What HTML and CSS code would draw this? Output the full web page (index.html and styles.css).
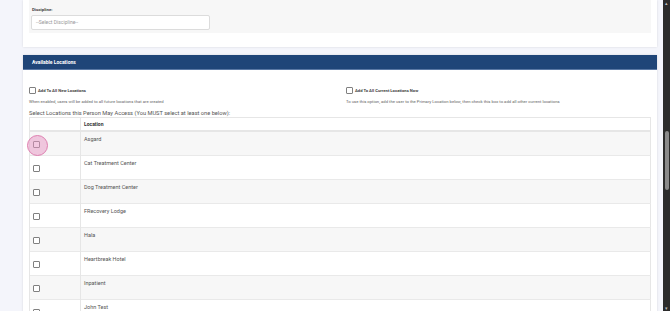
FILE: index.html
```html
<!DOCTYPE html>
<html lang="en">
<head>
  <meta charset="UTF-8">
  <title>User Locations</title>
  <link rel="stylesheet" href="styles.css">
</head>
<body>

<div class="screen">
  <div class="page">

    <!-- Discipline -->
    <div class="card card-top">
      <div class="well">
        <div class="field-label">Discipline:</div>
        <div class="select">--Select Discipline--</div>
      </div>
    </div>

    <!-- Locations -->
    <div class="card">
      <div class="card-header">Available Locations</div>
      <div class="card-body">
        <div class="options">
          <div class="option">
            <div class="option-line"><span class="check"></span><span class="option-label">Add To All New Locations</span></div>
            <div class="option-help">When enabled, users will be added to all future locations that are created</div>
          </div>
          <div class="option">
            <div class="option-line"><span class="check"></span><span class="option-label">Add To All Current Locations Now</span></div>
            <div class="option-help">To use this option, add the user to the Primary Location below, then check this box to add all other current locations</div>
          </div>
        </div>

        <div class="hint">Select Locations this Person May Access (You MUST select at least one below):</div>

        <table class="loc-table">
          <thead>
            <tr><th class="col-check"></th><th>Location</th></tr>
          </thead>
          <tbody>
            <tr><td class="col-check"><span class="check focus"></span></td><td>Asgard</td></tr>
            <tr><td class="col-check"><span class="check"></span></td><td>Cat Treatment Center</td></tr>
            <tr><td class="col-check"><span class="check"></span></td><td>Dog Treatment Center</td></tr>
            <tr><td class="col-check"><span class="check"></span></td><td>FRecovery Lodge</td></tr>
            <tr><td class="col-check"><span class="check"></span></td><td>Hala</td></tr>
            <tr><td class="col-check"><span class="check"></span></td><td>Heartbreak Hotel</td></tr>
            <tr><td class="col-check"><span class="check"></span></td><td>Inpatient</td></tr>
            <tr><td class="col-check"><span class="check"></span></td><td>John Test</td></tr>
          </tbody>
        </table>
      </div>
    </div>

  </div>

  <div class="scrollbar">
    <div class="arrow">&#9652;</div>
    <div class="track"><div class="thumb"></div></div>
    <div class="arrow">&#9662;</div>
  </div>
</div>

</body>
</html>
```

FILE: styles.css
```css
html, body {
  margin: 0;
  padding: 0;
  height: 100%;
  overflow: hidden;
}

body {
  font-family: Roboto, 'Liberation Sans', sans-serif;
  background-color: #f4f5fb;
  color: #555;
}

.screen {
  display: flex;
  height: 311px;
}

.page {
  flex: 1;
  padding: 0 6px 0 23px;
  overflow: hidden;
}

.card {
  background-color: white;
  box-shadow: 0 0 2px rgba(0,0,0,0.12);
  margin-bottom: 8px;
}

.card-top {
  padding: 0 6px 14px;
}

.well {
  background-color: #f7f7f7;
  padding: 7px 2px 3px;
}

.field-label {
  font-size: 4.4px;
  font-weight: bold;
  color: #444;
  line-height: 6px;
  padding-left: 1px;
  margin-bottom: 2px;
}

.select {
  width: 173px;
  height: 13px;
  line-height: 13px;
  padding-left: 4px;
  background-color: white;
  border: 1px solid #dcdcdc;
  border-radius: 2px;
  font-size: 5px;
  color: #999;
}

.card-header {
  background-color: #1f4578;
  border-bottom: 1px solid #5a78a4;
  color: white;
  font-weight: bold;
  font-size: 5px;
  height: 14px;
  line-height: 15px;
  padding-left: 9px;
}

.card-body {
  padding: 17px 6px 0;
}

.options {
  display: grid;
  grid-template-columns: 317px 1fr;
}

.option-line {
  display: flex;
  align-items: center;
  height: 7px;
}

.option-label {
  font-size: 4.2px;
  font-weight: bold;
  color: #444;
  margin-left: 2px;
}

.option-help {
  font-size: 4.2px;
  line-height: 5px;
  margin-top: 5px;
  color: #666;
}

.check {
  display: inline-block;
  box-sizing: border-box;
  width: 7px;
  height: 7px;
  border: 1px solid #808080;
  border-radius: 1px;
  background-color: white;
}

.hint {
  font-size: 5.7px;
  line-height: 8px;
  margin-top: 5px;
  color: #555;
}

.loc-table {
  width: 100%;
  border-collapse: collapse;
  border: 1px solid #e6e6e6;
  font-size: 5.5px;
}

.loc-table th {
  text-align: left;
  height: 12px;
  padding: 0 3px;
  border-bottom: 2px solid #e6e6e6;
  border-left: 1px solid #e6e6e6;
  font-weight: bold;
  color: #333;
  font-size: 5px;
}

.loc-table td {
  height: 19px;
  padding: 4px 3px 0;
  vertical-align: top;
  border-top: 1px solid #e9e9e9;
  border-left: 1px solid #e6e6e6;
  color: #555;
  line-height: 6px;
}

.loc-table tbody tr:nth-child(odd) {
  background-color: #f7f7f7;
}

.loc-table .col-check {
  width: 44px;
}

.loc-table th.col-check {
  padding: 0;
  width: 50px;
}

.loc-table td.col-check {
  vertical-align: middle;
  padding: 2px 2px 0 3px;
}

.check.focus {
  position: relative;
}

.check.focus::before {
  content: "";
  position: absolute;
  left: -7px;
  top: -7px;
  width: 19px;
  height: 19px;
  border-radius: 50%;
  border: 1px solid #de7fb0;
  background-color: rgba(232, 150, 195, 0.5);
}

.scrollbar {
  width: 7px;
  background-color: #2b2b2b;
  display: flex;
  flex-direction: column;
}

.arrow {
  height: 6px;
  font-size: 5px;
  line-height: 6px;
  text-align: center;
  color: #bbb;
}

.track {
  flex: 1;
  padding-top: 125px;
}

.thumb {
  width: 4px;
  height: 59px;
  margin-left: 2px;
  border-radius: 2px;
  background-color: #8a8a8a;
}
```
